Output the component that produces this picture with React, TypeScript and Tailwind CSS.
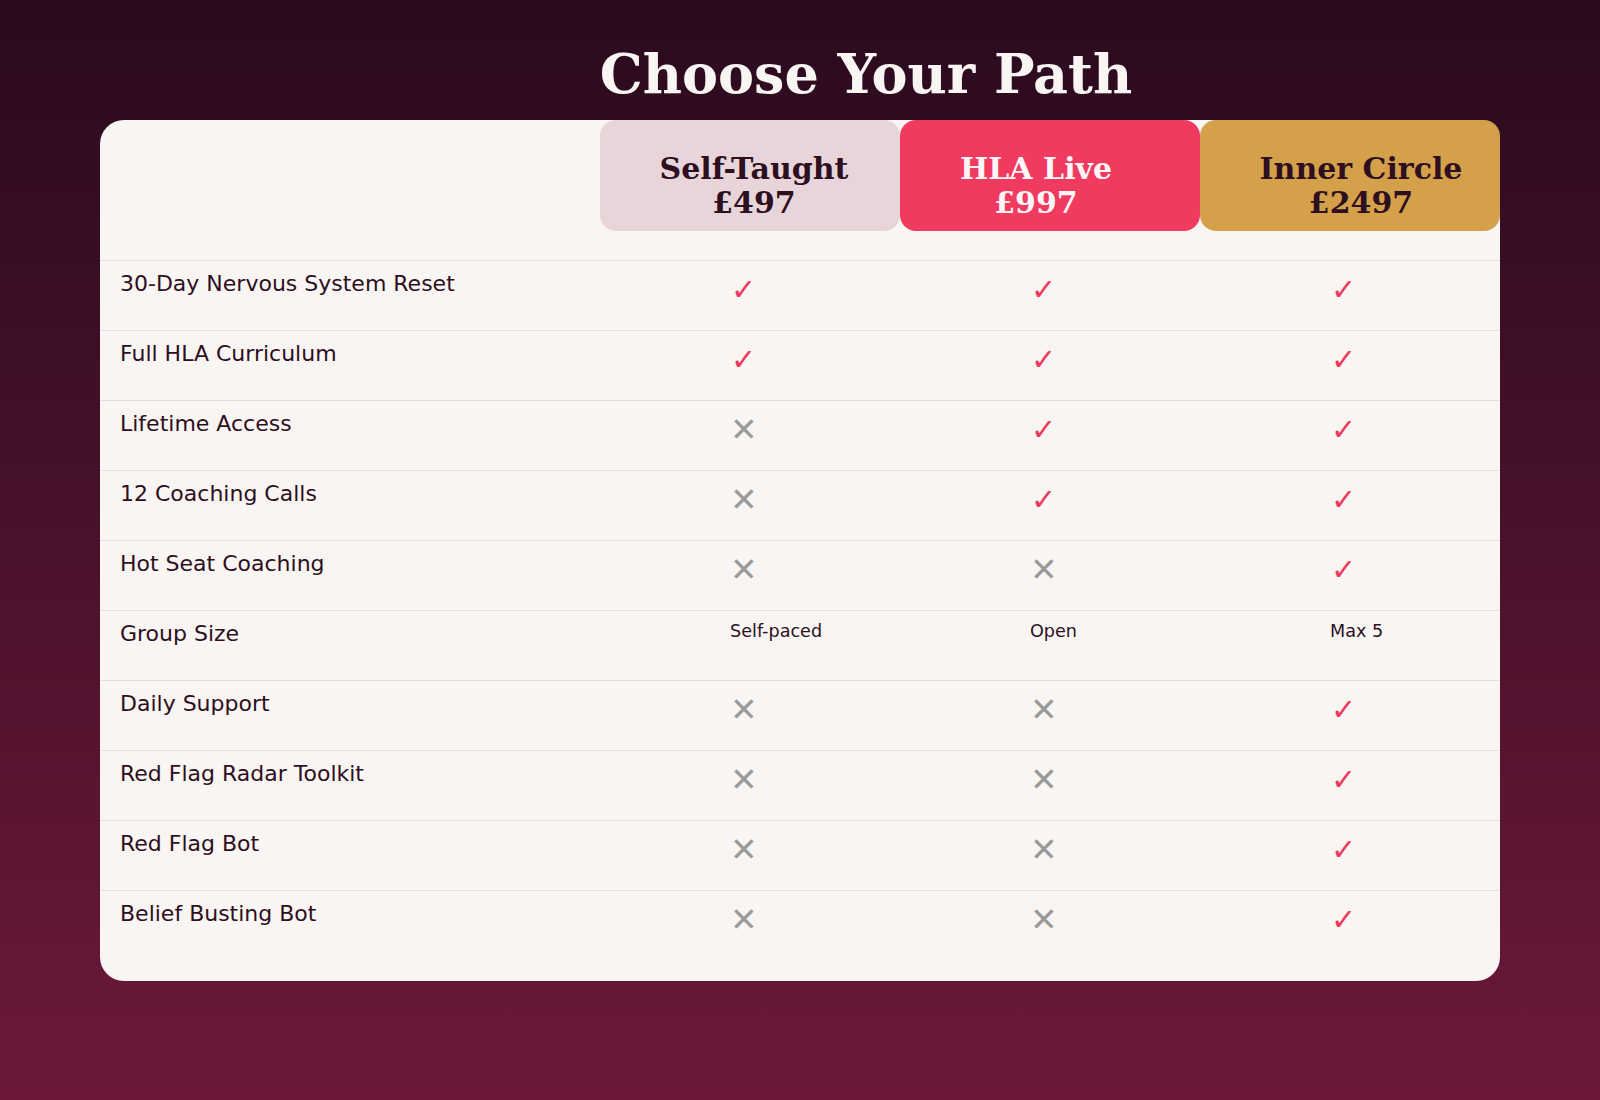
import React from "react";

type Cell = "y" | "n" | string;
const rows: { label: string; cells: Cell[] }[] = [
  { label: "30-Day Nervous System Reset", cells: ["y", "y", "y"] },
  { label: "Full HLA Curriculum", cells: ["y", "y", "y"] },
  { label: "Lifetime Access", cells: ["n", "y", "y"] },
  { label: "12 Coaching Calls", cells: ["n", "y", "y"] },
  { label: "Hot Seat Coaching", cells: ["n", "n", "y"] },
  { label: "Group Size", cells: ["Self-paced", "Open", "Max 5"] },
  { label: "Daily Support", cells: ["n", "n", "y"] },
  { label: "Red Flag Radar Toolkit", cells: ["n", "n", "y"] },
  { label: "Red Flag Bot", cells: ["n", "n", "y"] },
  { label: "Belief Busting Bot", cells: ["n", "n", "y"] },
];

function Mark({ v }: { v: Cell }) {
  if (v === "y")
    return (
      <div className="pl-[131px] pt-[14px]">
        <span className="text-[30px] leading-none text-[#ec3a5e]">✓</span>
      </div>
    );
  if (v === "n")
    return (
      <div className="pl-[130px] pt-[12px]">
        <span className="text-[33px] leading-none text-[#9a9a9a]">✕</span>
      </div>
    );
  return (
    <div className="pl-[130px] pt-[9px]">
      <span className="text-[17.6px] leading-none text-[#2d0f1f]">{v}</span>
    </div>
  );
}

export default function App() {
  return (
    <div
      className="w-[1600px] h-[1100px] bg-gradient-to-b from-[#2a0a1e] to-[#6d183a] flex flex-col items-center"
      style={{ fontFamily: "'DejaVu Sans', sans-serif" }}
    >
      <div className="w-full flex justify-center pl-[132px] pt-[47px]">
        <h1
          className="text-[54px] leading-none font-bold text-[#f9f5f2]"
          style={{ fontFamily: "'DejaVu Serif', serif" }}
        >
          Choose Your Path
        </h1>
      </div>
      <div className="mt-[19px] w-[1400px] bg-[#f9f5f2] rounded-[24px] pb-[21px]">
        <div className="grid grid-cols-[500px_300px_300px_300px] h-[140px]">
          <div />
          <div className="h-[111px] rounded-[16px] bg-[#e8d5da] text-[#2d0f1f] pl-[8px] pt-[32px] text-center">
            <Head name="Self-Taught" price="£497" />
          </div>
          <div className="h-[111px] rounded-[16px] bg-[#f03a5f] text-[#fdf5f6] pr-[28px] pt-[32px] text-center">
            <Head name="HLA Live" price="£997" />
          </div>
          <div className="h-[111px] rounded-[16px] bg-[#d4a04a] text-[#2d0f1f] pl-[22px] pt-[32px] text-center">
            <Head name="Inner Circle" price="£2497" />
          </div>
        </div>
        {rows.map((r) => (
          <div
            key={r.label}
            className="grid grid-cols-[500px_300px_300px_300px] h-[70px] border-t border-[#ebdbe0]"
          >
            <div className="pl-[20px] pt-[6px] text-[22px] leading-[33px] text-[#2d0f1f]">
              {r.label}
            </div>
            {r.cells.map((c, i) => (
              <Mark key={i} v={c} />
            ))}
          </div>
        ))}
      </div>
    </div>
  );
}

function Head({ name, price }: { name: string; price: string }) {
  return (
    <div
      className="text-[30px] leading-[34px] font-bold"
      style={{ fontFamily: "'DejaVu Serif', serif" }}
    >
      <div>{name}</div>
      <div>{price}</div>
    </div>
  );
}
